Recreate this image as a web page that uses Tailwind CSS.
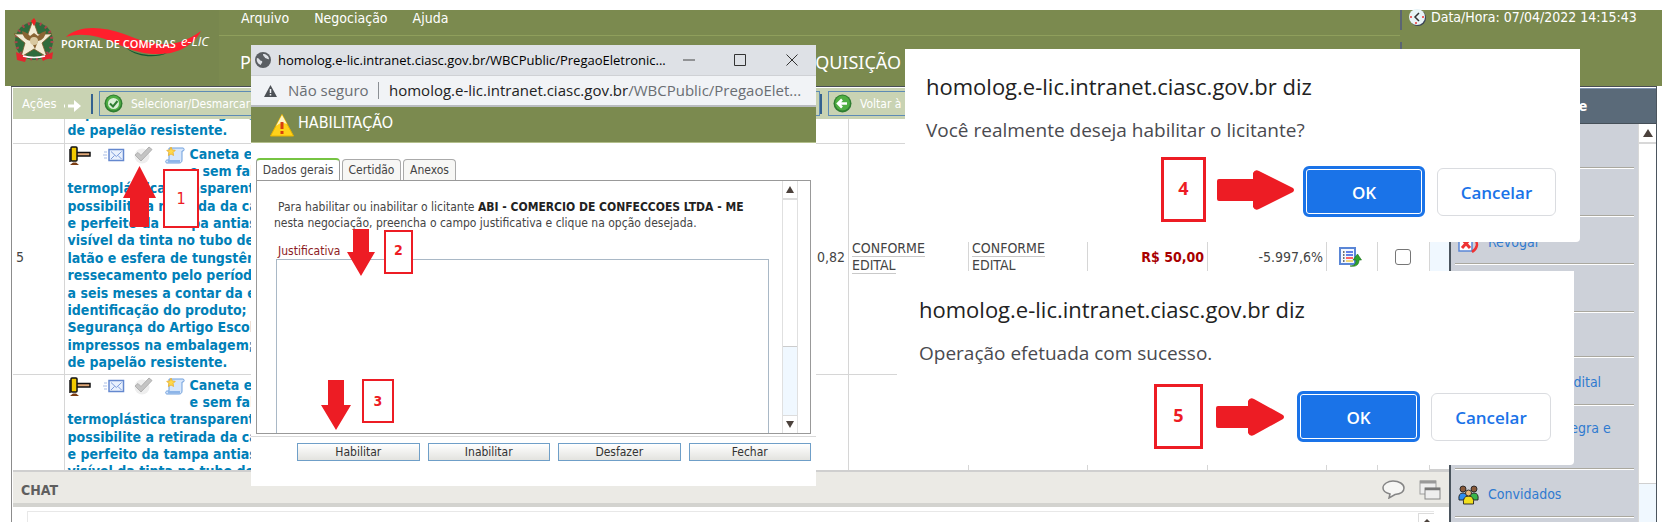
<!DOCTYPE html>
<html lang="pt-BR">
<head>
<meta charset="utf-8">
<title>Portal de Compras e-LIC</title>
<script src="https://cdn.jsdelivr.net/npm/@tailwindcss/browser@4"></script>
</head>
<body class="h-screen overflow-hidden bg-white font-['DejaVu_Sans_Condensed','DejaVu_Sans',sans-serif] text-sm text-[#444]">

<svg class="hidden">
  <symbol id="hammer" viewBox="0 0 22 20">
    <path d="M7 6.500h14v3.500H7z" fill="#e0a878" stroke="#111" stroke-width="1.500"/>
    <rect x="2" y="1" width="6" height="14" rx="1" fill="#f2c900" stroke="#111" stroke-width="1.500"/>
    <path d="M1 3v13" stroke="#111" stroke-width="1.500"/>
    <path d="M1 19l3-2.500h3l3 2.500z" fill="#7a3b10"/>
  </symbol>
  <symbol id="mail" viewBox="0 0 22 14">
    <path d="M1 4h3M0 7h4M1 10h3" stroke="#a9bde6" stroke-width="1"/>
    <rect x="6" y="1.500" width="14.500" height="11" fill="#e9f1fd" stroke="#6488cf" stroke-width="1.500"/>
    <path d="M8 3.500l5.300 5 5.300-5M8 11l3.500-3.500M18.500 11L15 7.500" fill="none" stroke="#7d9cda"/>
  </symbol>
  <symbol id="check" viewBox="0 0 20 18">
    <circle cx="9" cy="10" r="7.500" fill="#eee"/>
    <path d="M2 9l3-2.500 3 3L16 1l3 2.500L8 15z" fill="#c4c4c4" stroke="#b0b0b0"/>
  </symbol>
  <symbol id="scroll" viewBox="0 0 20 18">
    <path d="M4 2h14c1.500 0 1.500 3 0 3h-1v9c0 2-1 3-3 3H2c-2 0-1.500-3 0-3h2z" fill="#d6e6fb" stroke="#6f9fdc"/>
    <path d="M3 14h12v2.500H3z" fill="#8db5e8"/>
    <path d="M6 1l1.300 3 3 .3-2.200 2.200.5 3L6 8 3.400 9.500l.5-3L1.700 4.300l3-.3z" fill="#ffd84a" stroke="#eba91c" stroke-width=".7"/>
  </symbol>
</svg>

<div class="flex h-full flex-col pb-[5px] pt-[10px]">
  <header class="ml-[5px] mr-[2px] flex h-[76px] shrink-0 bg-[#7b8a4f] text-white">
    <a href="#" aria-label="Portal de Compras e-LIC" class="w-[214px] shrink-0 bg-[#78874e]">
      <svg class="h-[76px] w-[214px]" viewBox="5 10 214 76">
        <circle cx="34" cy="41" r="19" fill="#2f6b3c"/>
        <circle cx="34" cy="41" r="18" fill="none" stroke="#a9444a" stroke-width="3" stroke-dasharray="2 4"/>
        <path d="M33 20l5 14 14 0-10 9 5 14-13-8-13 8 4-14-11-9h14z" fill="#f3ecd6" stroke="#7a5a2a" stroke-width=".8"/>
        <path d="M22 31q6 2 8 5l4-3 4 3q3-4 8-5-1 9-8 10l-3 8-4-8q-8-1-9-10z" fill="#8a6534"/>
        <circle cx="34" cy="41" r="4" fill="#d9c9a0"/>
        <path d="M31 21l3-3 2 3-2 5z" fill="#e22"/>
        <path d="M16 52q18 10 37 0l-1 7q-5-1-9 2l-2-4q-7 2-14 0l-2 5-8-2z" fill="#e3262e"/>
        <path d="M23 56q11 3 22 0" fill="none" stroke="#fff" stroke-width="1.500"/>
        <path d="M66 37C78 25 102 26 124 34c27 11 50 17 77-3-6 12-21 23-41 23-27 1-42-12-62-17-12-3-23-3-32 0z" fill="#ff1f2d"/>
        <path d="M126 48c12 7 26 9 41 5-10 5-29 5-41-5z" fill="#0c5a33"/>
        <text x="61" y="48" font-family="Open Sans, sans-serif" font-size="11" font-weight="600" fill="#fff">PORTAL DE COMPRAS</text>
        <text x="181" y="46" font-family="Open Sans, sans-serif" font-size="13" font-style="italic" fill="#fff">e-LIC</text>
      </svg>
    </a>
    <div class="min-w-0 flex-1">
      <nav class="flex h-[26px] items-start gap-[25px] border-b border-[#8f9f5c] pl-[22px]">
        <a href="#" class="leading-[17px]">Arquivo</a>
        <a href="#" class="leading-[17px]">Negociação</a>
        <a href="#" class="leading-[17px]">Ajuda</a>
      </nav>
      <h1 class="flex h-[50px] items-center pl-[21px] pt-px font-['Noto_Sans',sans-serif] text-lg">
        <span class="w-[564px]">PREGÃO</span><span>AQUISIÇÃO</span>
      </h1>
    </div>
    <div class="w-[262px] shrink-0">
      <p class="flex h-5 items-start gap-1 border-l-2 border-[#5b6573] pl-[6px] leading-[14px]">
        <svg class="-mt-px h-[18px] w-[19px]" viewBox="0 0 19 18"><circle cx="10" cy="9" r="8" fill="#3a4356"/><circle cx="9" cy="8" r="8" fill="#e8f4f7"/><path d="M11 4L7 8l4 4" fill="none" stroke="#333" stroke-width="1.500"/><circle cx="3" cy="8" r="1" fill="#e33"/><circle cx="15" cy="8" r="1" fill="#e33"/><circle cx="8" cy="14" r="1" fill="#e33"/></svg>
        Data/Hora: 07/04/2022 14:15:43
      </p>
      <div class="mt-3 h-11 border-l-2 border-[#5b6573]"></div>
    </div>
  </header>

  <div class="ml-[11px] mr-[7px] flex min-h-0 flex-1 border-t border-[#4a4f55]">
    <main class="flex min-w-0 flex-1 flex-col border-l border-[#8c8c8c] pl-px">
      <div class="mt-px flex h-[31px] shrink-0 items-center bg-[#c9d3b3] text-[13px] text-white">
        <span class="ml-[9px] w-[42px] leading-[26px]">Ações</span>
        <svg class="mt-1 h-4 w-[18px]" viewBox="0 0 18 16"><path d="M0 8h1M4 8h8" stroke="#fff" stroke-width="3"/><path d="M10 2l7 6-7 6z" fill="#fff"/></svg>
        <span class="ml-[9px] h-5 w-[2px] bg-[#34618f]"></span>
        <button class="ml-[6px] flex h-[25px] w-[721px] shrink-0 items-center gap-2 border border-[#5d8bb5] pl-1">
          <svg class="size-[19px]" viewBox="0 0 19 19"><circle cx="9.500" cy="9.500" r="9" fill="#2f7d31"/><circle cx="9.500" cy="9" r="7.500" fill="#4fae42"/><circle cx="9.500" cy="9.500" r="5.500" fill="#d9efd3"/><path d="M6 9.500l3 3L13.500 7" fill="none" stroke="#2f7d31" stroke-width="2"/></svg>
          <span class="text-xs leading-[22px]">Selecionar/Desmarcar todos</span>
        </button>
        <span class="h-5 w-[2px] bg-[#34618f]"></span>
        <button class="ml-[6px] flex h-[25px] items-center gap-2 border border-[#5d8bb5] pl-1 pr-2">
          <svg class="size-[19px]" viewBox="0 0 19 19"><circle cx="9.500" cy="9.500" r="9" fill="#2f7d31"/><circle cx="9.500" cy="9" r="7.500" fill="#4fae42"/><path d="M14 9.500H6M9 5.500l-4 4 4 4" fill="none" stroke="#fff" stroke-width="2.500"/></svg>
          <span class="text-xs leading-[22px]">Voltar à página</span>
        </button>
      </div>

      <div class="flex min-h-0 flex-1">
        <div class="min-w-0 flex-1 overflow-hidden">
          <table class="-mt-[18px] w-full table-fixed border-collapse">
            <colgroup><col class="w-[51px]"><col><col class="w-[60px]"><col class="w-[120px]"><col class="w-[119px]"><col class="w-[120px]"><col class="w-[119px]"><col class="w-[51px]"><col class="w-[52px]"></colgroup>
            <tbody>
              <tr class="h-[42px] border-b border-[#d6d6d6] [&>td]:border-r [&>td]:border-[#d6d6d6]">
                <td></td>
                <td class="border-r-0! py-1 pl-[3px] align-top font-bold leading-[17px] whitespace-nowrap text-[#0080b8]">impressos na embalagem; em caixa<br>de papelão resistente.</td>
                <td></td><td></td><td></td><td></td><td></td><td></td><td></td>
              </tr>
              <tr class="h-[231px] border-b border-[#d6d6d6] [&>td]:border-r [&>td]:border-[#d6d6d6]">
                <td class="pb-1 pl-[3px]">5</td>
                <td class="border-r-0! py-[2px] pl-[3px] align-top font-bold leading-[17px] whitespace-nowrap text-[#0080b8]">
                  <div class="flex h-[225px] flex-col justify-between">
                    <div class="flex">
                      <div class="flex w-[122px] items-start">
                        <svg class="ml-px h-5 w-[22px]"><use href="#hammer"/></svg>
                        <svg class="ml-3 mt-[2px] h-[14px] w-[22px]"><use href="#mail"/></svg>
                        <svg class="ml-2 h-[18px] w-5"><use href="#check"/></svg>
                        <svg class="ml-3 h-[18px] w-5"><use href="#scroll"/></svg>
                      </div>
                      <div>Caneta esferográfica<br>e sem falhas, corpo</div>
                    </div>
                    <div>termoplástica transparente</div>
                    <div>possibilite a retirada da carga</div>
                    <div>e perfeito da tampa antiasfixiante</div>
                    <div>visível da tinta no tubo de carga</div>
                    <div>latão e esfera de tungstênio</div>
                    <div>ressecamento pelo período</div>
                    <div>a seis meses a contar da entrega</div>
                    <div>identificação do produto; selo</div>
                    <div>Segurança do Artigo Escolar</div>
                    <div>impressos na embalagem; em caixa</div>
                    <div>de papelão resistente.</div>
                  </div>
                </td>
                <td class="pb-1 pr-[3px] text-right">0,82</td>
                <td class="pb-1 pl-[3px] leading-[17px]"><span class="border-b border-[#c9c9c9]">CONFORME</span><br><span class="border-b border-[#c9c9c9]">EDITAL</span></td>
                <td class="pb-1 pl-[3px] leading-[17px]"><span class="border-b border-[#c9c9c9]">CONFORME</span><br><span class="border-b border-[#c9c9c9]">EDITAL</span></td>
                <td class="pb-1 pr-[3px] text-right font-bold text-[#a80000]">R$ 50,00</td>
                <td class="pb-1 pr-[3px] text-right">-5.997,6%</td>
                <td class="pb-1"><svg class="ml-3 h-5 w-[23px]" viewBox="0 0 23 20"><rect x="1" y="1" width="15" height="16" fill="#f4f8ff" stroke="#5a86d6" stroke-width="2"/><path d="M4 5h1.500M4 8h1.500M4 11h1.500M4 14h1.500" stroke="#444" stroke-width="1.500"/><path d="M7 5h7M7 8h7" stroke="#3157e0" stroke-width="1.500"/><path d="M7 11h7" stroke="#f33" stroke-width="1.500"/><path d="M7 14h7" stroke="#f4cf4d" stroke-width="1.500"/><path d="M11 19c5 0 6-3 6-6h-3l4.500-6 4 6h-2.500c0 5-3 7-9 6z" fill="#2fa32b" stroke="#1b6e1d" stroke-width=".6"/></svg></td>
                <td class="pb-1"><input type="checkbox" aria-label="Selecionar item 5" class="ml-[17px] block size-4 appearance-none rounded-[3px] border border-[#767676] bg-white"></td>
              </tr>
              <tr class="h-[231px] [&>td]:border-r [&>td]:border-[#d6d6d6]">
                <td></td>
                <td class="border-r-0! py-[2px] pl-[3px] align-top font-bold leading-[17px] whitespace-nowrap text-[#0080b8]">
                  <div class="flex h-[225px] flex-col justify-between">
                    <div class="flex">
                      <div class="flex w-[122px] items-start">
                        <svg class="ml-px h-5 w-[22px]"><use href="#hammer"/></svg>
                        <svg class="ml-3 mt-[2px] h-[14px] w-[22px]"><use href="#mail"/></svg>
                        <svg class="ml-2 h-[18px] w-5"><use href="#check"/></svg>
                        <svg class="ml-3 h-[18px] w-5"><use href="#scroll"/></svg>
                      </div>
                      <div>Caneta esferográfica<br>e sem falhas, corpo</div>
                    </div>
                    <div>termoplástica transparente</div>
                    <div>possibilite a retirada da carga</div>
                    <div>e perfeito da tampa antiasfixiante</div>
                    <div>visível da tinta no tubo de carga</div>
                    <div>latão e esfera de tungstênio</div>
                    <div>ressecamento pelo período</div>
                    <div>a seis meses a contar da entrega</div>
                    <div>identificação do produto; selo</div>
                    <div>Segurança do Artigo Escolar</div>
                    <div>impressos na embalagem; em caixa</div>
                    <div>de papelão resistente.</div>
                  </div>
                </td>
                <td></td><td></td><td></td><td></td><td></td><td></td><td></td>
              </tr>
            </tbody>
          </table>
        </div>
        <div class="flex w-[19px] shrink-0 flex-col bg-[#f0f8ff]"><div class="mt-auto h-5 border-b border-[#d0d0d0] bg-white"></div></div>
      </div>

      <section class="shrink-0">
        <div class="flex h-[37px] items-center border-b-4 border-t-2 border-b-[#d3d3cf] border-t-[#cfcfcf] bg-[#ebeae5] pl-2 pr-2 pt-1">
          <h2 class="font-bold text-[#5f5f5f]">CHAT</h2>
          <button aria-label="Abrir conversa" class="ml-auto"><svg class="h-[19px] w-[25px]" viewBox="0 0 25 19"><path d="M12 1c6 0 11 3 11 7s-4 6-9 6.500L8 18l1-4c-4-1-7-3-7-6 0-4 5-7 10-7z" fill="#f6f6f4" stroke="#858585" stroke-width="1.500"/></svg></button>
          <button aria-label="Restaurar janela" class="ml-[13px]"><svg class="h-5 w-[22px]" viewBox="0 0 22 20"><rect x="1" y="1" width="16" height="13" fill="#eee" stroke="#a0a0a0"/><path d="M1 2h16" stroke="#999" stroke-width="3"/><rect x="6" y="8" width="15" height="11" fill="#eee" stroke="#888"/><path d="M6 9h15" stroke="#777" stroke-width="2.500"/></svg></button>
        </div>
        <div class="ml-[14px] mr-[15px] mt-1 flex h-[11px] justify-end border-l border-t border-[#e8e8e8]"><span class="mt-px flex w-4 items-end justify-center border-l border-t border-[#dcdcdc]"><svg class="h-[3px] w-[6px]" viewBox="0 0 6 3"><path d="M3 0l3 3H0z" fill="#4c423c"/></svg></span></div>
      </section>
    </main>

    <aside class="flex w-[208px] shrink-0 flex-col border-x border-l-2 border-[#4b555e]">
      <h2 class="mt-px flex h-[36px] shrink-0 items-center justify-center border-b border-t border-b-[#454f58] border-t-[#7e93b0] bg-[#5a6a79] font-bold text-white">Atividade</h2>
      <div class="flex min-h-0 flex-1 bg-[#cdd1d9]">
        <ul class="min-w-0 flex-1 overflow-hidden px-1 text-[#2f7ad0] [&>li]:flex [&>li]:items-center [&>li]:border-b [&>li]:border-[#aaa89f] [&>li]:leading-[17px] [&>li]:shadow-[0_1px_0_#fff]">
          <li class="h-11"></li>
          <li class="h-12"></li>
          <li class="h-12 pt-[6px]"><svg class="mx-[3px] h-5 w-[21px]" viewBox="0 0 21 20"><rect x="1" y="1" width="13" height="17" fill="#fff" stroke="#5a86d6" stroke-width="1.500"/><path d="M4 6l8 9M12 6l-8 9" stroke="#e33" stroke-width="3"/><path d="M14 19c6-4 6-9 3-13" fill="none" stroke="#e33" stroke-width="2.500"/></svg><a href="#" class="ml-[6px]">Revogar</a></li>
          <li class="h-12"></li>
          <li class="h-[45px]"></li>
          <li class="h-12 pt-1"><a href="#" class="ml-[33px] whitespace-nowrap">Cadastrar o Edital</a></li>
          <li class="h-16"><a href="#" class="ml-[33px] whitespace-nowrap">Publicar a íntegra e<br>anexos</a></li>
          <li class="h-12 pt-1"><svg class="mx-[3px] h-5 w-[21px]" viewBox="0 0 21 20" stroke="#222" stroke-width=".9"><path d="M1 15q-1-7 4-7t5 7z" fill="#2d8cf0"/><path d="M11 15q0-7 5-7t4 7z" fill="#39b54a"/><circle cx="5" cy="4" r="3" fill="#8a5a3a"/><circle cx="16" cy="4" r="3" fill="#8a5a3a"/><path d="M5.500 19q-1-8 5-8t5 8z" fill="#f2df1d"/><circle cx="10.500" cy="8" r="3" fill="#e5b77c"/></svg><a href="#" class="ml-[6px]">Convidados</a></li>
          <li class="h-12"></li>
        </ul>
        <div class="flex w-[18px] shrink-0 flex-col border-l border-[#d8d8d8] bg-[#f0f8ff]">
          <span class="flex h-5 shrink-0 items-center justify-center border-b-2 border-[#d8d8d8] bg-white"><svg class="h-2 w-[10px]" viewBox="0 0 10 8"><path d="M5 0l5 8H0z" fill="#4c423c"/></svg></span>
          <span class="h-[340px] border-b border-[#d0d0d0] bg-white"></span>
        </div>
      </div>
    </aside>
  </div>
</div>

<!-- Callout 1 -->
<svg class="absolute left-[123px] top-[166px] h-[61px] w-[33px]" viewBox="0 0 33 61"><path d="M16.500 0L33 32h-7v29H7V32H0z" fill="#ed1c24"/></svg>
<div class="absolute left-[163px] top-[169px] flex h-[59px] w-9 items-center justify-center border-2 border-[#ed1c24] bg-white text-base text-[#ed1c24]">1</div>

<!-- Qualification window -->
<section class="absolute left-[251px] top-[45px] flex h-[441px] w-[565px] flex-col bg-white font-['Open_Sans',sans-serif]" aria-label="Habilitação">
  <div class="flex h-[30px] shrink-0 items-center bg-[#dee1e6] pl-1 text-[13px] text-black">
    <svg class="size-4" viewBox="0 0 16 16"><circle cx="8" cy="8" r="8" fill="#5a5e63"/><path d="M2 6c3 0 2 3 5 3 1 2-1 2-1 4-3-1-5-4-4-7zM8 2c0 3 2 2 2 4 2 0 3 2 4 1 0-3-3-5-6-5z" fill="#dee1e6"/></svg>
    <span class="ml-[7px] leading-5 whitespace-nowrap">homolog.e-lic.intranet.ciasc.gov.br/WBCPublic/PregaoEletronic...</span>
    <button aria-label="Minimizar" class="ml-auto"><svg class="size-3" viewBox="0 0 12 12"><path d="M0 6h12" stroke="#444"/></svg></button>
    <button aria-label="Maximizar" class="ml-[39px]"><svg class="size-3" viewBox="0 0 12 12"><path d="M.5.5h11v11H.5z" fill="none" stroke="#333"/></svg></button>
    <button aria-label="Fechar janela" class="ml-10 mr-[18px]"><svg class="size-3" viewBox="0 0 12 12"><path d="M.5.5l11 11M11.500.5l-11 11" stroke="#333"/></svg></button>
  </div>
  <div class="flex h-[32px] shrink-0 items-center border-b-2 border-t border-b-[#b9bcc0] border-t-[#cfd1d5] bg-[#f1f3f6] pl-[13px] text-[15px] whitespace-nowrap text-[#6a6e73]">
    <svg class="h-3 w-[13px]" viewBox="0 0 13 12"><path d="M6.500 0L13 12H0z" fill="#4d5156"/><path d="M6.500 4v4M6.500 9v1.500" stroke="#f1f3f6" stroke-width="1.500"/></svg>
    <span class="ml-[11px] w-20">Não seguro</span>
    <span class="mx-[10px] h-[17px] w-px bg-[#8b8f94]"></span>
    <span><span class="text-[#222]">homolog.e-lic.intranet.ciasc.gov.br</span>/WBCPublic/PregaoElet...</span>
  </div>
  <h2 class="flex h-9 shrink-0 items-center border-b border-[#b3bf8c] bg-[#7b8a4f] pl-[19px] pb-1 text-base text-white font-['DejaVu_Sans_Condensed',sans-serif]">
    <svg class="mr-1 mt-1 h-6 w-6" viewBox="0 0 24 24"><path d="M12 1.500L23.500 23H.5z" fill="#ffd21a" stroke="#e8b400" stroke-linejoin="round"/><path d="M12 2l5 9q-6-3-11 2z" fill="#fff4c0"/><path d="M12 9v7M12 18v3" stroke="#d8400f" stroke-width="3"/></svg>
    HABILITAÇÃO
  </h2>
  <div class="mx-[5px] mt-[15px] flex min-h-0 flex-1 flex-col font-['DejaVu_Sans_Condensed',sans-serif] text-xs text-[#444]">
    <div class="flex h-[22px] shrink-0 items-end gap-[2px]">
      <button class="h-[22px] w-[84px] rounded-t border-x border-t-2 border-x-[#999] border-t-[#76c442] bg-white">Dados gerais</button>
      <button class="h-[21px] w-[59px] rounded-t border border-b-0 border-[#aaa] bg-[#f7f7f5]">Certidão</button>
      <button class="h-[21px] w-[53px] rounded-t border border-b-0 border-[#aaa] bg-[#f7f7f5]">Anexos</button>
    </div>
    <div class="flex min-h-0 flex-1 overflow-hidden border border-[#999]">
      <div class="flex min-w-0 flex-1 flex-col pl-[17px] pt-[18px] leading-4">
        <p class="whitespace-nowrap indent-1">Para habilitar ou inabilitar o licitante <b class="text-[#222]">ABI - COMERCIO DE CONFECCOES LTDA - ME</b><br>nesta negociação, preencha o campo justificativa e clique na opção desejada.</p>
        <label for="justificativa" class="ml-1 mt-3 text-[#8c1c24]">Justificativa</label>
        <textarea id="justificativa" class="ml-[2px] mr-[13px] block h-[200px] shrink-0 resize-none border border-[#a9b8c6] bg-white"></textarea>
      </div>
      <div class="mr-3 flex w-4 shrink-0 flex-col border-x border-[#e0e0e0] bg-[#f0f8ff]">
        <span class="flex h-[19px] items-center justify-center border-b-2 border-[#ddd] bg-white"><svg class="h-[7px] w-2" viewBox="0 0 8 7"><path d="M4 0l4 7H0z" fill="#4c423c"/></svg></span>
        <span class="h-[147px] border-b border-[#ccc] bg-white"></span>
        <span class="mt-auto flex h-[18px] items-center justify-center border-t border-[#ddd] bg-white"><svg class="h-[7px] w-2" viewBox="0 0 8 7"><path d="M0 0h8L4 7z" fill="#4c423c"/></svg></span>
      </div>
    </div>
  </div>
  <div class="mt-[2px] flex h-[50px] shrink-0 gap-2 border-t border-[#d9d9d9] pl-[46px] pr-[5px] pt-[6px] font-['DejaVu_Sans_Condensed',sans-serif] text-xs text-[#333]">
    <button class="h-[18px] flex-1 border border-[#6f9fc8] bg-linear-to-b from-white to-[#e3e3df]">Habilitar</button>
    <button class="h-[18px] flex-1 border border-[#6f9fc8] bg-linear-to-b from-white to-[#e3e3df]">Inabilitar</button>
    <button class="h-[18px] flex-1 border border-[#6f9fc8] bg-linear-to-b from-white to-[#e3e3df]">Desfazer</button>
    <button class="h-[18px] flex-1 border border-[#6f9fc8] bg-linear-to-b from-white to-[#e3e3df]">Fechar</button>
  </div>
</section>

<!-- Callouts 2 and 3 -->
<svg class="absolute left-[347px] top-[229px] h-[47px] w-7" viewBox="0 0 28 47"><path d="M6 0h16v23h6L14 47 0 23h6z" fill="#ed1c24"/></svg>
<div class="absolute left-[384px] top-[230px] flex h-11 w-[29px] items-center justify-center border-2 border-[#ed1c24] bg-white pb-1 font-bold text-[#ed1c24]">2</div>
<svg class="absolute left-[321px] top-[380px] h-[50px] w-[30px]" viewBox="0 0 30 50"><path d="M7 0h16v25h7L15 50 0 25h7z" fill="#ed1c24"/></svg>
<div class="absolute left-[362px] top-[379px] flex h-11 w-8 items-center justify-center border-2 border-[#ed1c24] bg-white font-bold text-[#ed1c24]">3</div>

<!-- Confirmation dialog -->
<section role="dialog" aria-label="Confirmação" class="absolute left-[905px] top-[49px] h-[193px] w-[675px] rounded-br bg-white pl-[21px] pr-6 pt-[21px] font-['Open_Sans',sans-serif]">
  <h2 class="text-[22px] leading-8 text-[#222]">homolog.e-lic.intranet.ciasc.gov.br diz</h2>
  <p class="mt-[14px] text-[19px] leading-7 text-[#4a4a4f]">Você realmente deseja habilitar o licitante?</p>
  <div class="mt-[13px] flex items-center justify-end">
    <span class="flex h-[65px] w-[45px] items-center justify-center border-[3px] border-[#ed1c24] pb-1 text-lg font-bold text-[#ed1c24]">4</span>
    <svg class="ml-[11px] mr-[9px] h-10 w-[77px]" viewBox="0 0 77 40"><path d="M2 9h34V3q2-4 6-2l34 17q2 2 0 4L42 39q-4 2-6-2v-6H2q-2 0-2-2V11q0-2 2-2z" fill="#ed1c24"/></svg>
    <button class="mt-1 h-[51px] w-[122px] rounded-md border-[3px] border-[#1a73e8] bg-[#1a73e8] pt-1 text-[17px] font-semibold text-white inset-ring-1 inset-ring-white">OK</button>
    <button class="ml-3 mt-1 h-12 w-[119px] rounded-md border border-[#dadce0] bg-white pt-1 text-[17px] font-semibold text-[#1a73e8]">Cancelar</button>
  </div>
</section>

<!-- Success dialog -->
<section role="dialog" aria-label="Sucesso" class="absolute left-[897px] top-[271px] h-[194px] w-[677px] rounded-br bg-white pl-[22px] pr-[23px] pt-[22px] font-['Open_Sans',sans-serif]">
  <h2 class="text-[22px] leading-8 text-[#222]">homolog.e-lic.intranet.ciasc.gov.br diz</h2>
  <p class="mt-[14px] text-[19px] leading-7 text-[#4a4a4f]">Operação efetuada com sucesso.</p>
  <div class="mt-[17px] flex items-center justify-end">
    <span class="flex h-[65px] w-[49px] items-center justify-center border-[3px] border-[#ed1c24] pb-1 text-lg font-bold text-[#ed1c24]">5</span>
    <svg class="ml-[13px] mr-[13px] h-[38px] w-[68px]" viewBox="0 0 68 38"><path d="M2 8h30V3q2-4 6-2l29 16q2 2 0 4L38 37q-4 2-6-2v-5H2q-2 0-2-2V10q0-2 2-2z" fill="#ed1c24"/></svg>
    <button class="h-[51px] w-[123px] rounded-md border-[3px] border-[#1a73e8] bg-[#1a73e8] pt-1 text-[17px] font-semibold text-white inset-ring-1 inset-ring-white">OK</button>
    <button class="ml-[11px] h-12 w-[120px] rounded-md border border-[#dadce0] bg-white pt-1 text-[17px] font-semibold text-[#1a73e8]">Cancelar</button>
  </div>
</section>
</body>
</html>
